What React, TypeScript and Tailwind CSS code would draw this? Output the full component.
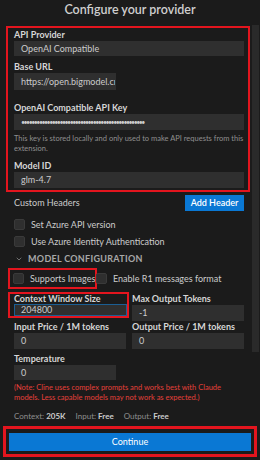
import { ChevronDown } from "lucide-react";

const font = "font-['Lato','Noto_Sans',sans-serif]";

function Label({ children }: { children: React.ReactNode }) {
  return <div className="h-[12px] text-[9px] leading-[12px] font-bold text-[#d6d6d6] whitespace-nowrap">{children}</div>;
}

function Field({ value, w = "w-full", h = "h-[16px]", focus = false, dots = false }: { value: string; w?: string; h?: string; focus?: boolean; dots?: boolean }) {
  return (
    <div className={`${w} ${h} bg-[#2f2f2f] flex items-center px-[6px] overflow-hidden border ${focus ? "border-[#1b5e93]" : "border-transparent"}`}>
      <span className={`${dots ? "text-[7px] tracking-[-1.5px]" : "text-[9px]"} text-[#cccccc] whitespace-nowrap`}>{value}</span>
    </div>
  );
}

function Check({ label }: { label: string }) {
  return (
    <div className="flex items-center gap-[6px] h-[17px]">
      <div className="w-[11px] h-[11px] rounded-[2px] bg-[#2f2f2f] border border-[#3a3a3a]" />
      <span className="text-[9px] text-[#cccccc] whitespace-nowrap">{label}</span>
    </div>
  );
}

export default function App() {
  return (
    <div className={`relative w-[260px] h-[460px] bg-[#1b1b1b] overflow-hidden ${font}`}>
      <div className="absolute right-[1px] top-[25px] w-[7px] h-[327px] bg-[#2a2a2a]" />
      <div className="h-[26px] flex justify-center pt-[2px] text-[12.5px] leading-[16px] font-semibold text-[#cfcfcf]">Configure your provider</div>

      <div className="ml-[6px] w-[244px] border-2 border-[#e3151e] pl-[6px] pr-[4px] pt-[1px] pb-[2px]">
        <Label>API Provider</Label>
        <Field value="OpenAI Compatible" h="h-[15px]" />
        <div className="mt-[5px]"><Label>Base URL</Label></div>
        <Field value="https://open.bigmodel.cn/" w="w-[102px]" h="h-[17px]" />
        <div className="mt-[12px]"><Label>OpenAI Compatible API Key</Label></div>
        <Field value="••••••••••••••••••••••••••••••••••••••••••••••••" dots />
        <div className="mt-[4px] text-[7.5px] leading-[10px] text-[#8f8f8f]">This key is stored locally and only used to make API requests from this extension.</div>
        <div className="mt-[6px]"><Label>Model ID</Label></div>
        <Field value="glm-4.7" />
      </div>

      <div className="px-[14px] pr-[16px]">
        <div className="flex items-center justify-between h-[19px] mt-[1px]">
          <span className="text-[9px] text-[#cccccc]">Custom Headers</span>
          <div className="w-[59px] h-[16px] bg-[#0a78d4] flex items-center justify-center text-[9px] text-white font-semibold">Add Header</div>
        </div>
        <div className="mt-[4px]"><Check label="Set Azure API version" /></div>
        <Check label="Use Azure Identity Authentication" />
        <div className="flex items-center gap-[5px] h-[18px] pl-[1px]">
          <ChevronDown className="w-[8px] h-[8px] text-[#9a9a9a]" strokeWidth={2} />
          <span className="text-[9px] font-bold tracking-[0.3px] text-[#a8a8a8]">MODEL CONFIGURATION</span>
        </div>
      </div>

      <div className="flex items-center">
        <div className="ml-[8px] w-[89px] h-[21px] border-2 border-[#e3151e] pl-[3px] flex items-center">
          <Check label="Supports Images" />
        </div>
        <div className="-ml-[1px]"><Check label="Enable R1 messages format" /></div>
      </div>

      <div className="flex mt-[3px] items-start">
        <div className="ml-[8px] w-[121px] h-[26px] border-2 border-[#e3151e] pl-[4px] flex flex-col">
          <div className="h-[10px] text-[9px] leading-[10px] font-bold text-[#d6d6d6] whitespace-nowrap">Context Window Size</div>
          <Field value="204800" w="w-[113px]" h="h-[12px]" focus />
        </div>
        <div className="ml-[3px] w-[112px] flex flex-col pt-[1px]">
          <Label>Max Output Tokens</Label>
          <Field value="-1" h="h-[16px]" />
        </div>
      </div>

      <div className="px-[14px] pr-[16px]">
        <div className="grid grid-cols-2 gap-[6px]">
          <div>
            <Label>Input Price / 1M tokens</Label>
            <Field value="0" />
          </div>
          <div>
            <Label>Output Price / 1M tokens</Label>
            <Field value="0" />
          </div>
        </div>
        <div className="mt-[4px]"><Label>Temperature</Label></div>
        <Field value="0" w="w-[102px]" h="h-[15px]" />
        <div className="mt-[3px] text-[7.5px] leading-[9.5px] text-[#e5403a]">(Note: Cline uses complex prompts and works best with Claude models. Less capable models may not work as expected.)</div>
        <div className="mt-[8px] flex gap-[10px] text-[8px] text-[#8f8f8f] whitespace-nowrap">
          <span>Context: <b className="text-[#cccccc] font-bold">205K</b></span>
          <span>Input: <b className="text-[#cccccc] font-bold">Free</b></span>
          <span>Output: <b className="text-[#cccccc] font-bold">Free</b></span>
        </div>
      </div>

      <div className="mt-[4px] ml-[3px] w-[254px] h-[31px] border-[3px] border-[#e3151e] px-[3px] pt-[4px]">
        <div className="h-[18px] bg-[#0a78d4] flex items-center justify-center text-[9px] text-white">Continue</div>
      </div>
    </div>
  );
}
